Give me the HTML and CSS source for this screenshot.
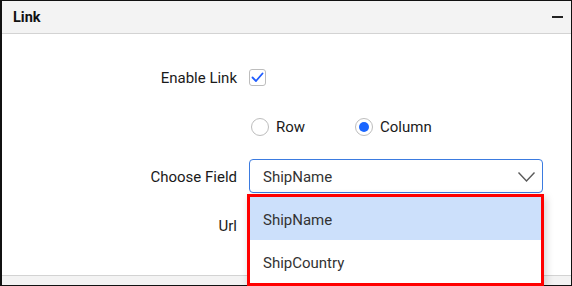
FILE: index.html
```html
<!DOCTYPE html>
<html>
<head>
<meta charset="utf-8">
<link rel="stylesheet" href="styles.css">
</head>
<body>
<div class="panel">
  <div class="header">
    <span class="title">Link</span>
    <span class="minus"></span>
  </div>
  <div class="content">
    <div class="form">
      <div class="label">Enable Link</div>
      <div class="control"><span class="checkbox"><svg width="13" height="11" viewBox="0 0 13 11"><polyline points="1.5,5.5 5,9 11.5,1.5" fill="none" stroke="#1f5cff" stroke-width="1.8" stroke-linecap="round" stroke-linejoin="round"/></svg></span></div>

      <div class="label"></div>
      <div class="control radios">
        <label class="radio-item first"><span class="radio"></span><span>Row</span></label>
        <label class="radio-item"><span class="radio checked"></span><span>Column</span></label>
      </div>

      <div class="label">Choose Field</div>
      <div class="control">
        <div class="dropdown">
          <span class="value">ShipName</span>
          <svg class="chev" width="19" height="12" viewBox="0 0 19 12"><polyline points="1.5,1.5 9.5,10 17.5,1.5" fill="none" stroke="#5a5a5a" stroke-width="1.4"/></svg>
          <div class="popup">
            <div class="item active">ShipName</div>
            <div class="item">ShipCountry</div>
          </div>
        </div>
      </div>

      <div class="label">Url</div>
      <div class="control"></div>
    </div>
  </div>
  <div class="footer"></div>
</div>
</body>
</html>
```

FILE: styles.css
```css
* { box-sizing: border-box; }
html, body { margin: 0; padding: 0; background: #fff; }
body {
  width: 572px;
  height: 286px;
  overflow: hidden;
  font-family: Roboto, "Liberation Sans", Arial, sans-serif;
  font-size: 15px;
  color: #1a1a1a;
}
.panel {
  width: 572px;
  height: 286px;
  border: 1px solid #111;
  border-left-width: 2px;
  display: flex;
  flex-direction: column;
}
.header {
  height: 33px;
  flex: none;
  background: #f3f3f3;
  border-bottom: 1px solid #d3d3d3;
  display: flex;
  align-items: center;
  justify-content: space-between;
  padding: 0 8px 0 11px;
}
.title {
  font-weight: 700;
  font-size: 14.5px;
  color: #111;
}
.minus {
  width: 11px;
  height: 2px;
  background: #222;
}
.content {
  flex: 1;
  padding-top: 26px;
  position: relative;
}
.form {
  display: grid;
  grid-template-columns: 235px 294px;
  column-gap: 12px;
  grid-auto-rows: 34px;
  row-gap: 15.5px;
}
.label {
  display: flex;
  align-items: center;
  justify-content: flex-end;
  color: #1a1a1a;
  padding-top: 1px;
}
.control {
  display: flex;
  align-items: center;
}
.checkbox {
  width: 17px;
  height: 17px;
  border: 1px solid #bdbdbd;
  border-radius: 3px;
  display: flex;
  align-items: center;
  justify-content: center;
  background: #fff;
}
.radios { padding-left: 2px; }
.radio-item {
  display: flex;
  align-items: center;
  gap: 7px;
  color: #1a1a1a;
}
.radio-item.first { width: 104px; }
.radio {
  width: 18px;
  height: 18px;
  border: 1px solid #bdbdbd;
  border-radius: 50%;
  display: flex;
  align-items: center;
  justify-content: center;
}
.radio.checked::after {
  content: "";
  width: 10px;
  height: 10px;
  border-radius: 50%;
  background: #1a66ff;
}
.dropdown {
  position: relative;
  width: 294px;
  height: 34px;
  border: 1px solid #3b7be0;
  border-radius: 4px;
  display: flex;
  align-items: center;
  justify-content: space-between;
  padding: 1px 6px 0 13px;
  color: #333;
}
.chev { display: block; }
.popup {
  position: absolute;
  top: 34px;
  left: -3px;
  width: 297px;
  height: 92px;
  border: 3px solid #f00;
  background: #fff;
  box-shadow: 2px 3px 8px rgba(0,0,0,0.18);
  z-index: 2;
}
.item {
  height: 43px;
  display: flex;
  align-items: center;
  padding: 3px 0 0 13px;
  color: #333;
}
.item.active { background: #cce0fb; }
.footer {
  height: 10px;
  flex: none;
  background: #f3f3f3;
  border-top: 1px solid #d3d3d3;
}
```
